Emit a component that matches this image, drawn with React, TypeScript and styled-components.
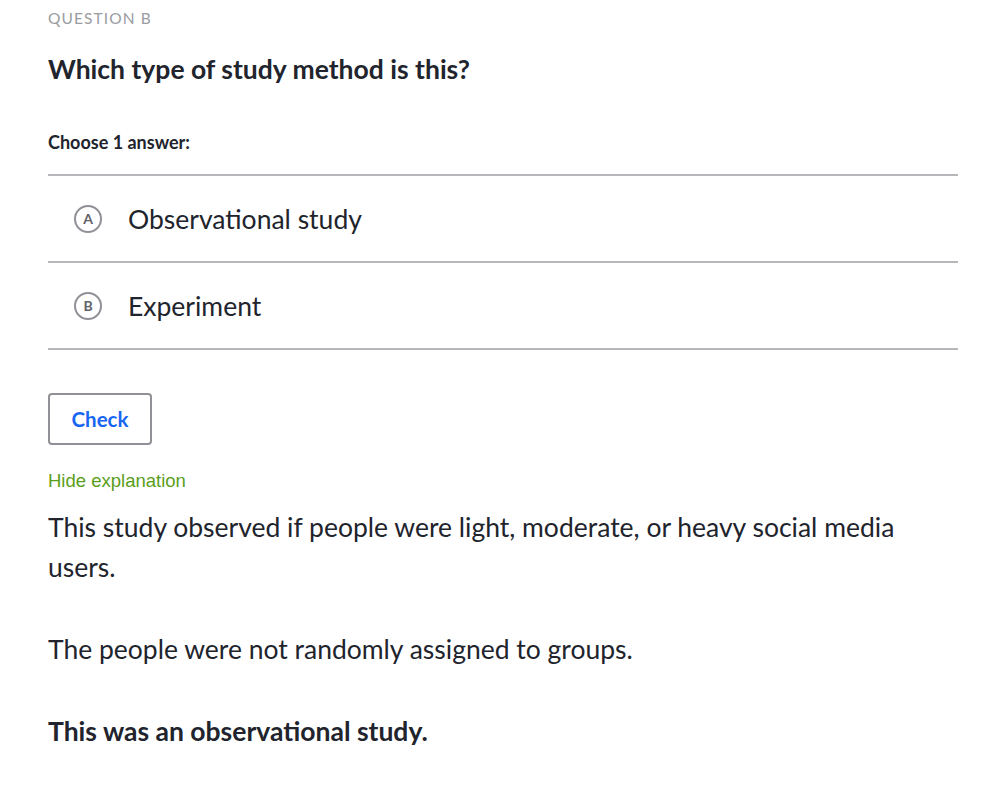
import styled, { createGlobalStyle } from 'styled-components'

const GlobalStyle = createGlobalStyle`
  body {
    margin: 0;
    background: #ffffff;
    font-family: Lato, 'Noto Sans', sans-serif;
    color: #21242c;
  }
`

const Page = styled.div`
  width: 910px;
  padding: 8px 0 20px 48px;
`

const Eyebrow = styled.div`
  font-size: 15.5px;
  line-height: 20px;
  letter-spacing: 1.1px;
  color: #9a9ca1;
  text-transform: uppercase;
`

const Title = styled.h1`
  margin: 25px 0 0;
  font-size: 26.5px;
  line-height: 32px;
  font-weight: 700;
`

const Prompt = styled.div`
  margin-top: 45px;
  font-size: 18px;
  line-height: 24px;
  font-weight: 700;
`

const Choices = styled.ul`
  list-style: none;
  margin: 20px 0 0;
  padding: 0;
  border-top: 2px solid #b5b7bb;
`

const Choice = styled.li`
  display: flex;
  align-items: center;
  gap: 26px;
  height: 85px;
  padding-left: 26px;
  border-bottom: 2px solid #b5b7bb;
  font-size: 26.5px;
`

const Letter = styled.span`
  display: flex;
  align-items: center;
  justify-content: center;
  box-sizing: border-box;
  width: 28px;
  height: 28px;
  border: 2px solid #8f9196;
  border-radius: 50%;
  font-size: 14px;
  font-weight: 700;
  color: #5f6167;
`

const CheckButton = styled.button`
  display: block;
  margin-top: 43px;
  width: 104px;
  height: 52px;
  background: #ffffff;
  border: 2px solid #8f9196;
  border-radius: 4px;
  font-family: Lato, 'Noto Sans', sans-serif;
  font-size: 20.5px;
  font-weight: 700;
  color: #1865f2;
  cursor: pointer;
`

const ToggleLink = styled.a`
  display: block;
  margin-top: 24px;
  font-family: 'Liberation Sans', Arial, sans-serif;
  font-size: 18.5px;
  line-height: 24px;
  color: #5a9e1c;
  cursor: pointer;
`

const Explanation = styled.div`
  margin-top: 14px;
`

const Para = styled.p<{ $strong?: boolean }>`
  margin: 0 0 42px;
  font-size: 26.5px;
  line-height: 40px;
  font-weight: ${(p) => (p.$strong ? 700 : 400)};

  &:last-child {
    margin-bottom: 0;
  }
`

const options = [
  { key: 'A', label: 'Observational study' },
  { key: 'B', label: 'Experiment' },
]

export default function App() {
  return (
    <>
      <GlobalStyle />
      <Page>
        <Eyebrow>Question B</Eyebrow>
        <Title>Which type of study method is this?</Title>
        <Prompt>Choose 1 answer:</Prompt>
        <Choices>
          {options.map((o) => (
            <Choice key={o.key}>
              <Letter>{o.key}</Letter>
              {o.label}
            </Choice>
          ))}
        </Choices>
        <CheckButton>Check</CheckButton>
        <ToggleLink>Hide explanation</ToggleLink>
        <Explanation>
          <Para>
            This study observed if people were light, moderate, or heavy social media users.
          </Para>
          <Para>The people were not randomly assigned to groups.</Para>
          <Para $strong>This was an observational study.</Para>
        </Explanation>
      </Page>
    </>
  )
}
